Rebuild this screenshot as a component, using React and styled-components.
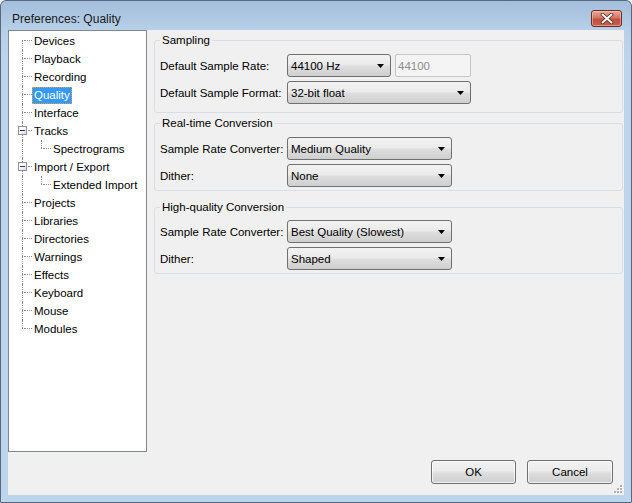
import styled, { createGlobalStyle } from 'styled-components';

const Global = createGlobalStyle`
  html, body {
    margin: 0;
    padding: 0;
    width: 632px;
    height: 503px;
    overflow: hidden;
    background: #ffffff;
  }
  * { box-sizing: border-box; }
`

const tree = [
  { label: 'Devices', first: true },
  { label: 'Playback' },
  { label: 'Recording' },
  { label: 'Quality', selected: true },
  { label: 'Interface' },
  { label: 'Tracks', expander: true },
  { label: 'Spectrograms', level: 2 },
  { label: 'Import / Export', expander: true },
  { label: 'Extended Import', level: 2 },
  { label: 'Projects' },
  { label: 'Libraries' },
  { label: 'Directories' },
  { label: 'Warnings' },
  { label: 'Effects' },
  { label: 'Keyboard' },
  { label: 'Mouse' },
  { label: 'Modules', last: true },
]

const Arrow = () => (
  <svg width="7" height="4" viewBox="0 0 7 4">
    <path d="M0 0H7L3.5 4Z" fill="#000" />
  </svg>
)

const Combo = ({ value, width }) => (
  <Select $w={width}>
    <span>{value}</span>
    <Arrow />
  </Select>
)

const TreeItem = ({ label, level = 1, first, last, expander, selected }) => (
  <Row>
    <Lead />
    {level === 2 && <Pass />}
    <Elbow>
      <Stem $on={level === 2 || !first} $h={expander ? 4 : 8} />
      <Mid $box={expander}>
        {expander ? (
          <Knot>
            <svg width="5" height="1" viewBox="0 0 5 1">
              <rect width="5" height="1" fill="#1e3287" />
            </svg>
          </Knot>
        ) : (
          <Dot />
        )}
        <Dash />
      </Mid>
      <Stem $on={level === 1 && !last} $grow />
    </Elbow>
    <Label $selected={selected}>{label}</Label>
  </Row>
)

export default function App() {
  return (
    <>
      <Global />
      <Window>
        <TitleBar>
          <Title>Preferences: Quality</Title>
          <Close>
            <svg width="14" height="11" viewBox="0 0 14 11">
              <path d="M2.5 1.5L11.5 9.5M11.5 1.5L2.5 9.5" stroke="#5a2a22" strokeWidth="3.6" strokeLinecap="round" />
              <path d="M2.5 1.5L11.5 9.5M11.5 1.5L2.5 9.5" stroke="#ffffff" strokeWidth="2" strokeLinecap="round" />
            </svg>
          </Close>
        </TitleBar>
        <Client>
          <Main>
            <Tree>
              {tree.map(item => (
                <TreeItem key={item.label} {...item} />
              ))}
            </Tree>
            <Panel>
              <Group $top={3} $pb={8}>
                <Legend>Sampling</Legend>
                <Grid>
                  <Caption>Default Sample Rate:</Caption>
                  <Inline>
                    <Combo value="44100 Hz" width={104} />
                    <TextBox>44100</TextBox>
                  </Inline>
                  <Caption>Default Sample Format:</Caption>
                  <Combo value="32-bit float" width={184} />
                </Grid>
              </Group>
              <Group $top={3} $pb={3}>
                <Legend>Real-time Conversion</Legend>
                <Grid>
                  <Caption>Sample Rate Converter:</Caption>
                  <Combo value="Medium Quality" width={165} />
                  <Caption>Dither:</Caption>
                  <Combo value="None" width={165} />
                </Grid>
              </Group>
              <Group $top={9} $pb={3} $pt={6}>
                <Legend>High-quality Conversion</Legend>
                <Grid>
                  <Caption>Sample Rate Converter:</Caption>
                  <Combo value="Best Quality (Slowest)" width={165} />
                  <Caption>Dither:</Caption>
                  <Combo value="Shaped" width={165} />
                </Grid>
              </Group>
            </Panel>
          </Main>
          <Footer>
            <Buttons>
              <Button $w={85}>OK</Button>
              <Button $w={86}>Cancel</Button>
            </Buttons>
            <Grip>
              <svg width="11" height="11" viewBox="0 0 11 11">
                {[[7, 1], [4, 4], [7, 4], [1, 7], [4, 7], [7, 7]].map(([x, y]) => (
                  <g key={`${x}-${y}`}>
                    <rect x={x + 1} y={y + 1} width="2" height="2" fill="#ffffff" />
                    <rect x={x} y={y} width="2" height="2" fill="#b4b4b4" />
                  </g>
                ))}
              </svg>
            </Grip>
          </Footer>
        </Client>
      </Window>
    </>
  )
}

const Window = styled.div`
  width: 632px;
  height: 503px;
  display: flex;
  flex-direction: column;
  padding: 0 7px 7px 7px;
  border: 1px solid #56697f;
  border-radius: 6px 6px 0 0;
  background: linear-gradient(to bottom, #a3bedb 0, #b7cfe8 28px, #bcd4ec 60px, #bcd4ec 100%);
  font-family: "Liberation Sans", Arial, sans-serif;
  font-size: 11.5px;
  color: #000;
`
const TitleBar = styled.div`
  height: 29px;
  display: flex;
  align-items: flex-start;
  justify-content: space-between;
`
const Title = styled.div`
  margin-top: 11px;
  padding-left: 4px;
  font-size: 12px;
  line-height: 15px;
  color: #1a1a1a;
`
const Close = styled.div`
  margin-top: 9px;
  margin-right: 2px;
  width: 31px;
  height: 17px;
  display: flex;
  align-items: center;
  justify-content: center;
  border: 1px solid #6e2b22;
  border-radius: 3px;
  background: linear-gradient(to bottom, #e8a99c 0%, #d47666 45%, #c0503e 55%, #c95f4c 100%);
  box-shadow: inset 0 0 0 1px rgba(255, 220, 210, 0.45);
`
const Client = styled.div`
  flex: 1;
  display: flex;
  flex-direction: column;
  background: #f0f0f0;
`
const Main = styled.div`
  height: 422px;
  display: flex;
`
const Tree = styled.div`
  width: 139px;
  height: 422px;
  padding-top: 1px;
  border: 1px solid #828790;
  background: #ffffff;
`
const Row = styled.div`
  height: 18px;
  display: flex;
  align-items: stretch;
`
const Lead = styled.span`
  width: 13px;
  flex: none;
`
const Pass = styled.span`
  width: 19px;
  flex: none;
  border-left: 1px dotted #8c8c8c;
`
const Elbow = styled.span`
  width: 10px;
  flex: none;
  display: flex;
  flex-direction: column;
`
const Stem = styled.span`
  height: ${p => (p.$grow ? 'auto' : `${p.$h}px`)};
  flex: ${p => (p.$grow ? 1 : 'none')};
  border-left: 1px dotted ${p => (p.$on ? '#8c8c8c' : 'transparent')};
`
const Mid = styled.span`
  height: ${p => (p.$box ? 9 : 1)}px;
  display: flex;
  align-items: center;
`
const Dot = styled.span`
  width: 1px;
  height: 1px;
  background: #8c8c8c;
`
const Knot = styled.span`
  width: 9px;
  height: 9px;
  margin-left: -4px;
  flex: none;
  display: flex;
  align-items: center;
  justify-content: center;
  border: 1px solid #919191;
  background: linear-gradient(135deg, #ffffff 30%, #dcdcdc 100%);
`
const Dash = styled.span`
  flex: 1;
  margin-left: 1px;
  height: 0;
  border-top: 1px dotted #8c8c8c;
`
const Label = styled.span`
  align-self: center;
  height: 17px;
  line-height: 15px;
  padding: 0 1px;
  white-space: nowrap;
  border: 1px ${p => (p.$selected ? 'dotted #e8a040' : 'solid transparent')};
  background: ${p => (p.$selected ? '#3399ff' : 'transparent')};
  color: ${p => (p.$selected ? '#ffffff' : '#000000')};
`
const Panel = styled.div`
  flex: 1;
  padding: 0 1px 0 7px;
  display: flex;
  flex-direction: column;
`
const Group = styled.fieldset`
  margin: ${p => p.$top}px 0 0 0;
  padding: ${p => p.$pt || 7}px 5px ${p => p.$pb}px 5px;
  min-width: 0;
  border: 1px solid #d5dfe5;
  border-radius: 3px;
`
const Legend = styled.legend`
  padding: 0 2px;
  line-height: 14px;
  font-size: 11.5px;
`
const Grid = styled.div`
  display: grid;
  grid-template-columns: 127px auto;
  grid-auto-rows: 23px;
  row-gap: 4px;
  align-items: center;
  justify-items: start;
`
const Caption = styled.span`
  white-space: nowrap;
`
const Inline = styled.div`
  display: flex;
  gap: 4px;
`
const Select = styled.div`
  width: ${p => p.$w}px;
  height: 23px;
  display: flex;
  align-items: center;
  justify-content: space-between;
  padding: 0 6px 0 3px;
  border: 1px solid #707070;
  border-radius: 3px;
  background: linear-gradient(to bottom, #f2f2f2 0%, #ebebeb 45%, #dddddd 55%, #cfcfcf 100%);
  white-space: nowrap;
`
const TextBox = styled.div`
  width: 76px;
  height: 23px;
  display: flex;
  align-items: center;
  padding: 0 2px;
  border: 1px solid #c5c5c5;
  border-radius: 2px;
  background: #f4f4f4;
  color: #8e8e8e;
`
const Footer = styled.div`
  flex: 1;
  display: flex;
  justify-content: flex-end;
  align-items: flex-start;
  padding-top: 8px;
`
const Buttons = styled.div`
  display: flex;
  gap: 11px;
`
const Button = styled.div`
  width: ${p => p.$w}px;
  height: 24px;
  display: flex;
  align-items: center;
  justify-content: center;
  border: 1px solid #707070;
  border-radius: 3px;
  background: linear-gradient(to bottom, #f2f2f2 0%, #ebebeb 45%, #dddddd 55%, #cfcfcf 100%);
  box-shadow: inset 0 0 0 1px rgba(255, 255, 255, 0.7);
`
const Grip = styled.div`
  align-self: flex-end;
  width: 11px;
  height: 11px;
  display: flex;
`
